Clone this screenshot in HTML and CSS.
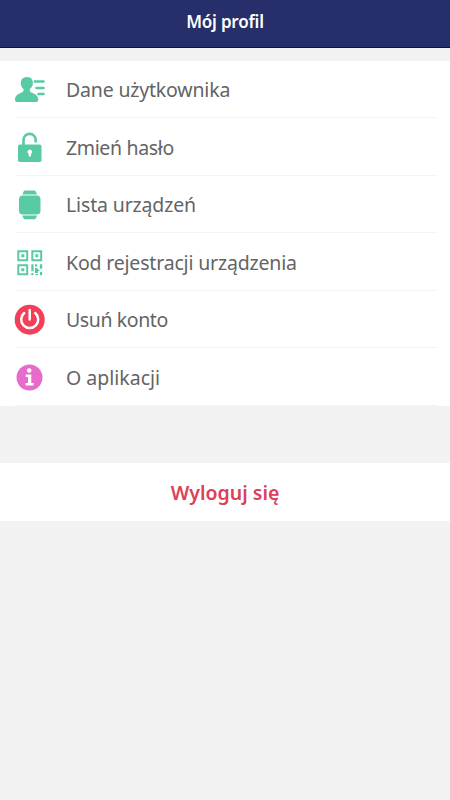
FILE: index.html
```html
<!DOCTYPE html>
<html lang="pl">
<head>
<meta charset="utf-8">
<title>Mój profil</title>
<link rel="stylesheet" href="styles.css">
</head>
<body>
<header class="topbar"><h1>Mój profil</h1></header>
<main>
<ul class="menu">
<li><svg class="icon green" viewBox="0 0 32 32"><path d="M13 3c-4 0-6.400 2.800-6.200 6.500.1 2.300 1.200 4.200 2.700 5.600.3 2-.4 2.900-2.200 3.600C3.500 20.100 1 22 1 25.600c0 1.700.7 2.500 2.300 2.500h18.700c1.600 0 2.300-.8 2.300-2.500 0-3.600-2.700-5.500-6.500-6.900-1.700-.6-2.400-1.600-1.900-3.600 1.500-1.400 2.900-3.300 3-5.600C19.100 5.800 17 3 13 3z"/><path class="user-lines" d="M20.800 7.500h8.700M22.500 14h7M24.500 20h5"/></svg><span class="t1">Dane użytkownika</span></li>
<li><svg class="icon green" viewBox="0 0 32 32"><path class="shackle" d="M9.500 14V8a6 6 0 0 1 12.200 0V10.500"/><rect x="4" y="12.500" width="23.500" height="17.500" rx="1.800"/><path class="white" d="M15.800 17.500a2.300 2.300 0 0 0-1.500 4l.6 3h1.800l.6-3a2.300 2.300 0 0 0-1.500-4z"/></svg><span class="t2">Zmień hasło</span></li>
<li><svg class="icon green" viewBox="0 0 32 32"><path d="M8.300 5.500 9.500 2.700Q10 1.600 11.200 1.600h9Q21.400 1.600 21.900 2.700L23.100 5.500zM8.300 26.500l1.200 2.700q.5 1.100 1.700 1.100h9q1.200 0 1.700-1.100l1.200-2.700z"/><rect x="5" y="6.500" width="21.500" height="19" rx="3.800"/></svg><span class="t3">Lista urządzeń</span></li>
<li><svg class="icon green qr" viewBox="0 0 32 32"><path class="qr-frames" d="M4.300 4.300h8.900v8.900H4.300zM18.300 4.300h8.900v8.900h-8.900zM4.300 18.300h8.900v8.900H4.300z"/><path d="M7.300 7.300h3v3h-3zM21.300 7.300h3v3h-3zM7.300 21.300h3v3h-3zM17.300 17.300h2.300v7h-2.300zM17.300 26h2v2.300h-2zM21 17.300h2.200v2.200H21zM25.800 17.300h2.400v4.500h-2.400zM21 21h2l3 3h-2v2h-3zM26 25h2.200v3.300H26zM21.500 27h2.500v1.300h-2.500z"/></svg><span class="t4">Kod rejestracji urządzenia</span></li>
<li><svg class="icon red" viewBox="0 0 32 32"><circle cx="15.700" cy="15.700" r="15"/><path class="power" d="M10.200 9a8.500 8.500 0 1 0 11 0M15.700 5.900v9.700"/></svg><span class="t5">Usuń konto</span></li>
<li><svg class="icon pink" viewBox="0 0 32 32"><circle cx="15.500" cy="15.500" r="13"/><g class="white"><circle cx="15.200" cy="8.500" r="2.300"/><path d="M11.700 12.600h5.600v8.500h2.300v2.300h-8v-2.300H14v-6.200h-2.300z"/></g></svg><span class="t6">O aplikacji</span></li>
</ul>
<button class="logout" type="button"><span>Wyloguj się</span></button>
</main>
</body>
</html>
```
FILE: styles.css
```css
* { box-sizing: border-box; }
body { margin: 0; min-height: 800px; background: #f2f2f2; font-family: "Noto Sans", sans-serif; }
.topbar { height: 48px; padding-bottom: 3px; background: #272f6b; border-bottom: 1px solid #100d50; display: flex; align-items: center; justify-content: center; }
h1 { margin: 0; color: #fff; font-size: 17px; line-height: 24px; font-weight: 600; letter-spacing: -.2px; }
.menu { list-style: none; margin: 12.500px 0 57.500px; padding: 0; background: #fff; }
.menu li { height: 57.500px; display: flex; align-items: center; padding: 2px 0 0 14px; gap: 20px; background: linear-gradient(#f4f4f4, #f4f4f4) 15px 100% / calc(100% - 28px) 1px no-repeat; }
.menu span { font-size: 19.500px; line-height: 28px; color: #646464; white-space: nowrap; }
.menu .t1 { letter-spacing: -.18px; }
.menu .t2 { letter-spacing: -.35px; }
.menu .t3 { letter-spacing: -.15px; }
.menu .t4 { letter-spacing: -.18px; }
.menu .t5 { letter-spacing: -.4px; }
.icon { width: 32px; height: 32px; flex: none; }
.green { fill: #58cba3; }
.red { fill: #f34059; }
.pink { fill: #e76bca; }
.white { fill: #fff; }
.user-lines, .shackle, .qr-frames, .power { fill: none; stroke: #58cba3; stroke-width: 2.600; stroke-linecap: round; }
.shackle { stroke-linecap: butt; }
.qr-frames { stroke-width: 2; stroke-linecap: butt; }
.power { stroke: #fff; stroke-width: 2.500; }
.logout { display: flex; align-items: center; justify-content: center; width: 100%; height: 57.500px; padding: 2px 0 0; border: 0; background: #fff; color: #dc405a; font: 600 19.500px/28px "Noto Sans", sans-serif; }
```
